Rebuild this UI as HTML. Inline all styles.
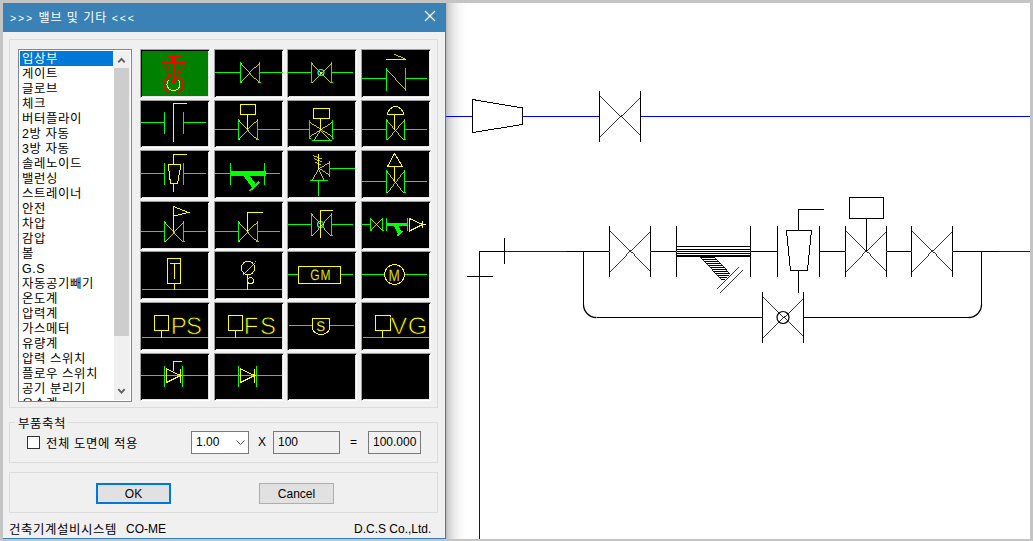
<!DOCTYPE html><html lang="ko"><head><meta charset="utf-8"><title>밸브 및 기타</title><style>
html,body{margin:0;padding:0}
body{width:1033px;height:541px;overflow:hidden;background:#c4c4c4;position:relative;font-family:"Liberation Sans","Noto Sans CJK KR",sans-serif;font-size:12px;color:#000}
.abs{position:absolute}
#canvas{left:446px;top:3px;width:584px;height:536px;background:#fff}
#shadow{left:446px;top:3px;width:20px;height:536px;background:linear-gradient(to right,rgba(0,0,0,.27),rgba(0,0,0,.17) 15%,rgba(0,0,0,.085) 40%,rgba(0,0,0,.03) 70%,rgba(0,0,0,0))}
#dlg{left:3px;top:3px;width:443px;height:536px;background:#f0f0f0;box-sizing:border-box;border-right:1px solid #3a82b6;border-bottom:1px solid #3a82b6}
#title{left:3px;top:3px;width:443px;height:29px;background:#3a82b6;color:#fff}
#title span{position:absolute;left:7px;top:7px;line-height:16px;white-space:pre;letter-spacing:1px}
#title i{font-style:normal;font-size:10.5px;letter-spacing:1.9px}
.grp{border:1px solid #dcdcdc;box-sizing:border-box}
#list{left:18px;top:49px;width:114px;height:353px;border:1px solid #828790;background:#fff;box-sizing:border-box;overflow:hidden}
.it{position:absolute;left:1px;width:93px;height:15px;line-height:17px;padding-left:2px;box-sizing:border-box;white-space:nowrap;letter-spacing:.6px;font-size:12.4px}
.sel{background:#0078d7;color:#fff}
#sb{left:95px;top:1px;width:16px;height:349px;background:#f0f0f0}
#thumb{left:0;top:17px;width:15px;height:268px;background:#cdcdcd}
.cell{width:70px;height:48px;box-sizing:border-box;background:#000;border:1px solid;border-color:#a0a0a0 #fff #fff #a0a0a0;box-shadow:inset 1px 1px 0 #000, inset -1px -1px 0 #e3e3e3}
.edit{box-sizing:border-box;border:1px solid #7a7a7a;height:23px;line-height:20px;padding-left:4px;white-space:nowrap;overflow:hidden}
.btn{box-sizing:border-box;border:1px solid #adadad;background:#e1e1e1;height:21px;line-height:20px;text-align:center}
.t{white-space:nowrap;line-height:14px}
.k{letter-spacing:.6px;font-size:12.4px}
</style></head><body>
<div id="canvas" class="abs"></div><div id="shadow" class="abs"></div>
<div id="dlg" class="abs"></div>
<div id="title" class="abs"><span><i>&gt;&gt;&gt;</i> 밸브 및 기타 <i>&lt;&lt;&lt;</i></span></div>
<div class="abs grp" style="left:9px;top:39px;width:429px;height:369px"></div>
<div class="abs grp" style="left:9px;top:422px;width:429px;height:41px"></div>
<div class="abs grp" style="left:9px;top:472px;width:429px;height:41px"></div>
<div class="abs t k" style="left:15px;top:417px;background:#f0f0f0;padding:0 2px 0 3px">부품축척</div>
<div id="list" class="abs">
<div class="it sel" style="top:1px">입상부</div>
<div class="it" style="top:16px">게이트</div>
<div class="it" style="top:31px">글로브</div>
<div class="it" style="top:46px">체크</div>
<div class="it" style="top:61px">버터플라이</div>
<div class="it" style="top:76px">2방 자동</div>
<div class="it" style="top:91px">3방 자동</div>
<div class="it" style="top:106px">솔레노이드</div>
<div class="it" style="top:121px">밸런싱</div>
<div class="it" style="top:136px">스트레이너</div>
<div class="it" style="top:151px">안전</div>
<div class="it" style="top:166px">차압</div>
<div class="it" style="top:181px">감압</div>
<div class="it" style="top:196px">볼</div>
<div class="it" style="top:211px">G.S</div>
<div class="it" style="top:226px">자동공기빼기</div>
<div class="it" style="top:241px">온도계</div>
<div class="it" style="top:256px">압력계</div>
<div class="it" style="top:271px">가스메터</div>
<div class="it" style="top:286px">유량계</div>
<div class="it" style="top:301px">압력 스위치</div>
<div class="it" style="top:316px">플로우 스위치</div>
<div class="it" style="top:331px">공기 분리기</div>
<div class="it" style="top:346px">유수계</div>
<div id="sb" class="abs"><div id="thumb" class="abs"></div></div>
</div>
<div class="abs cell" style="left:140px;top:49px;height:49px;background:#008000"></div>
<div class="abs cell" style="left:214px;top:49px;height:49px"></div>
<div class="abs cell" style="left:287px;top:49px;height:49px"></div>
<div class="abs cell" style="left:361px;top:49px;height:49px"></div>
<div class="abs cell" style="left:140px;top:100px;height:48px"></div>
<div class="abs cell" style="left:214px;top:100px;height:48px"></div>
<div class="abs cell" style="left:287px;top:100px;height:48px"></div>
<div class="abs cell" style="left:361px;top:100px;height:48px"></div>
<div class="abs cell" style="left:140px;top:150px;height:49px"></div>
<div class="abs cell" style="left:214px;top:150px;height:49px"></div>
<div class="abs cell" style="left:287px;top:150px;height:49px"></div>
<div class="abs cell" style="left:361px;top:150px;height:49px"></div>
<div class="abs cell" style="left:140px;top:201px;height:49px"></div>
<div class="abs cell" style="left:214px;top:201px;height:49px"></div>
<div class="abs cell" style="left:287px;top:201px;height:49px"></div>
<div class="abs cell" style="left:361px;top:201px;height:49px"></div>
<div class="abs cell" style="left:140px;top:251px;height:49px"></div>
<div class="abs cell" style="left:214px;top:251px;height:49px"></div>
<div class="abs cell" style="left:287px;top:251px;height:49px"></div>
<div class="abs cell" style="left:361px;top:251px;height:49px"></div>
<div class="abs cell" style="left:140px;top:302px;height:49px"></div>
<div class="abs cell" style="left:214px;top:302px;height:49px"></div>
<div class="abs cell" style="left:287px;top:302px;height:49px"></div>
<div class="abs cell" style="left:361px;top:302px;height:49px"></div>
<div class="abs cell" style="left:140px;top:353px;height:48px"></div>
<div class="abs cell" style="left:214px;top:353px;height:48px"></div>
<div class="abs cell" style="left:287px;top:353px;height:48px"></div>
<div class="abs cell" style="left:361px;top:353px;height:48px"></div>
<div class="abs" style="left:27px;top:436px;width:13px;height:13px;box-sizing:border-box;border:1px solid #333;background:#fff"></div>
<div class="abs t k" style="left:46px;top:437px">전체 도면에 적용</div>
<div class="abs edit" style="left:191px;top:431px;width:58px;background:#fff">1.00</div>
<div class="abs t" style="left:258px;top:435px">X</div>
<div class="abs edit" style="left:273px;top:431px;width:67px">100</div>
<div class="abs t" style="left:350px;top:435px">=</div>
<div class="abs edit" style="left:368px;top:431px;width:53px">100.000</div>
<div class="abs btn" style="left:96px;top:483px;width:75px;border:2px solid #0078d7;line-height:18px">OK</div>
<div class="abs btn" style="left:259px;top:483px;width:75px">Cancel</div>
<div class="abs t k" style="left:9px;top:523px">건축기계설비시스템</div>
<div class="abs t" style="left:126px;top:522px">CO-ME</div>
<div class="abs t" style="left:354px;top:522px">D.C.S Co.,Ltd.</div>
<svg class="abs" style="left:0;top:0" width="1033" height="541" viewBox="0 0 1033 541" shape-rendering="crispEdges"><line x1="446" y1="116.5" x2="472" y2="116.5" stroke="#0000ff" stroke-width="1" /><line x1="523" y1="116.5" x2="599" y2="116.5" stroke="#0000ff" stroke-width="1" /><line x1="641" y1="116.5" x2="1030" y2="116.5" stroke="#0000ff" stroke-width="1" /><path d="M472.5 99.5 L522.5 108 L522.5 124.5 L472.5 132.5 Z" stroke="#000" stroke-width="1" fill="none" /><line x1="599.5" y1="91" x2="599.5" y2="142" stroke="#000" stroke-width="1" /><line x1="640.5" y1="91" x2="640.5" y2="142" stroke="#000" stroke-width="1" /><line x1="599.5" y1="96.5" x2="641.3" y2="137.3" stroke="#000" stroke-width="0.8" /><line x1="599.5" y1="136.5" x2="641.3" y2="95.7" stroke="#000" stroke-width="0.8" /><line x1="479.5" y1="251" x2="479.5" y2="277" stroke="#000" stroke-width="1" /><line x1="479.5" y1="277" x2="479.5" y2="539" stroke="#0000ff" stroke-width="1" /><line x1="467" y1="276.5" x2="493" y2="276.5" stroke="#000" stroke-width="1" /><line x1="479" y1="251.5" x2="505" y2="251.5" stroke="#000" stroke-width="1" /><line x1="504.5" y1="238" x2="504.5" y2="264" stroke="#000" stroke-width="1" /><line x1="505" y1="251.5" x2="567" y2="251.5" stroke="#0000ff" stroke-width="1" /><line x1="567" y1="251.5" x2="609" y2="251.5" stroke="#000" stroke-width="1" /><line x1="609.5" y1="226" x2="609.5" y2="277" stroke="#000" stroke-width="1" /><line x1="650.5" y1="226" x2="650.5" y2="277" stroke="#000" stroke-width="1" /><line x1="609.5" y1="231.5" x2="651.3" y2="272.3" stroke="#000" stroke-width="0.8" /><line x1="609.5" y1="271.5" x2="651.3" y2="230.7" stroke="#000" stroke-width="0.8" /><line x1="651" y1="251.5" x2="677" y2="251.5" stroke="#000" stroke-width="1" /><line x1="676.5" y1="226" x2="676.5" y2="277" stroke="#000" stroke-width="1" /><line x1="750.5" y1="226" x2="750.5" y2="277" stroke="#000" stroke-width="1" /><line x1="676" y1="246.5" x2="751" y2="246.5" stroke="#000" stroke-width="1" /><line x1="676" y1="249.5" x2="751" y2="249.5" stroke="#000" stroke-width="1" /><line x1="676" y1="251.5" x2="751" y2="251.5" stroke="#000" stroke-width="1" /><line x1="676" y1="253.5" x2="751" y2="253.5" stroke="#000" stroke-width="1" /><line x1="676" y1="255.5" x2="751" y2="255.5" stroke="#000" stroke-width="1" /><line x1="676" y1="256.5" x2="751" y2="256.5" stroke="#000" stroke-width="1" /><line x1="701" y1="257.5" x2="715" y2="257.5" stroke="#000" stroke-width="1" /><line x1="702" y1="259.5" x2="717" y2="259.5" stroke="#000" stroke-width="1" /><line x1="704" y1="261.5" x2="719" y2="261.5" stroke="#000" stroke-width="1" /><line x1="706" y1="263.5" x2="721" y2="263.5" stroke="#000" stroke-width="1" /><line x1="708" y1="265.5" x2="723" y2="265.5" stroke="#000" stroke-width="1" /><line x1="710" y1="267.5" x2="725" y2="267.5" stroke="#000" stroke-width="1" /><line x1="712" y1="269.5" x2="727" y2="269.5" stroke="#000" stroke-width="1" /><line x1="713" y1="271.5" x2="728" y2="271.5" stroke="#000" stroke-width="1" /><line x1="715" y1="273.5" x2="730" y2="273.5" stroke="#000" stroke-width="1" /><line x1="717" y1="275.5" x2="729" y2="275.5" stroke="#000" stroke-width="1" /><line x1="719" y1="277.5" x2="727" y2="277.5" stroke="#000" stroke-width="1" /><line x1="721" y1="279.5" x2="725" y2="279.5" stroke="#000" stroke-width="1" /><line x1="699.6" y1="256" x2="721.7" y2="280" stroke="#000" stroke-width="0.8" /><line x1="713.3" y1="256" x2="729.8" y2="273.5" stroke="#000" stroke-width="0.8" /><line x1="716" y1="289" x2="738.5" y2="266.5" stroke="#000" stroke-width="0.8" /><line x1="720" y1="292.5" x2="742.5" y2="270" stroke="#000" stroke-width="0.8" /><line x1="751" y1="251.5" x2="778" y2="251.5" stroke="#000" stroke-width="1" /><line x1="777.5" y1="226" x2="777.5" y2="277" stroke="#000" stroke-width="1" /><line x1="819.5" y1="226" x2="819.5" y2="277" stroke="#000" stroke-width="1" /><path d="M786.5 230.5 L811.5 230.5 L807.5 270.5 L790.5 270.5 Z" stroke="#000" stroke-width="1" fill="none" /><line x1="798.5" y1="209" x2="798.5" y2="231" stroke="#000" stroke-width="1" /><line x1="798" y1="209.5" x2="824" y2="209.5" stroke="#000" stroke-width="1" /><line x1="798.5" y1="271" x2="798.5" y2="293" stroke="#000" stroke-width="1" /><line x1="820" y1="251.5" x2="846" y2="251.5" stroke="#000" stroke-width="1" /><line x1="845.5" y1="226" x2="845.5" y2="277" stroke="#000" stroke-width="1" /><line x1="886.5" y1="226" x2="886.5" y2="277" stroke="#000" stroke-width="1" /><line x1="845.5" y1="231.5" x2="887.3" y2="272.3" stroke="#000" stroke-width="0.8" /><line x1="845.5" y1="271.5" x2="887.3" y2="230.7" stroke="#000" stroke-width="0.8" /><line x1="866.5" y1="218" x2="866.5" y2="252" stroke="#000" stroke-width="1" /><path d="M849.5 197.5 H883.5 V218.5 H849.5 Z" stroke="#000" stroke-width="1" fill="none" /><line x1="887" y1="251.5" x2="912" y2="251.5" stroke="#000" stroke-width="1" /><line x1="911.5" y1="226" x2="911.5" y2="277" stroke="#000" stroke-width="1" /><line x1="952.5" y1="226" x2="952.5" y2="277" stroke="#000" stroke-width="1" /><line x1="911.5" y1="231.5" x2="953.3" y2="272.3" stroke="#000" stroke-width="0.8" /><line x1="911.5" y1="271.5" x2="953.3" y2="230.7" stroke="#000" stroke-width="0.8" /><line x1="953" y1="251.5" x2="999" y2="251.5" stroke="#000" stroke-width="1" /><line x1="999" y1="251.5" x2="1030" y2="251.5" stroke="#0000ff" stroke-width="1" /><line x1="583.5" y1="251" x2="583.5" y2="305" stroke="#000" stroke-width="1" /><line x1="597" y1="317.5" x2="762" y2="317.5" stroke="#000" stroke-width="1" /><path d="M583.5 304.5 A13 13 0 0 0 596.5 317.5" stroke="#000" stroke-width="1.3" fill="none" shape-rendering="geometricPrecision"/><line x1="981.5" y1="251" x2="981.5" y2="305" stroke="#000" stroke-width="1" /><line x1="804" y1="317.5" x2="969" y2="317.5" stroke="#000" stroke-width="1" /><path d="M981.5 304.5 A13 13 0 0 1 968.5 317.5" stroke="#000" stroke-width="1.3" fill="none" shape-rendering="geometricPrecision"/><line x1="762.5" y1="292" x2="762.5" y2="343" stroke="#000" stroke-width="1" /><line x1="803.5" y1="292" x2="803.5" y2="343" stroke="#000" stroke-width="1" /><line x1="762.5" y1="297.5" x2="804.3" y2="338.3" stroke="#000" stroke-width="0.8" /><line x1="762.5" y1="337.5" x2="804.3" y2="296.7" stroke="#000" stroke-width="0.8" /><circle cx="783" cy="317.5" r="6" fill="none" stroke="#000" stroke-width="1.2" shape-rendering="geometricPrecision"/><line x1="609" y1="251.5" x2="610" y2="251.5" stroke="#00a000" stroke-width="1" /><line x1="650" y1="251.5" x2="651" y2="251.5" stroke="#00a000" stroke-width="1" /><line x1="676" y1="251.5" x2="677" y2="251.5" stroke="#00a000" stroke-width="1" /><line x1="750" y1="251.5" x2="751" y2="251.5" stroke="#00a000" stroke-width="1" /><line x1="845" y1="251.5" x2="846" y2="251.5" stroke="#00a000" stroke-width="1" /><line x1="886" y1="251.5" x2="887" y2="251.5" stroke="#00a000" stroke-width="1" /><line x1="911" y1="251.5" x2="912" y2="251.5" stroke="#00a000" stroke-width="1" /><line x1="952" y1="251.5" x2="953" y2="251.5" stroke="#00a000" stroke-width="1" /><line x1="173.5" y1="52" x2="173.5" y2="84" stroke="#ff0000" stroke-width="1" /><line x1="167" y1="55.5" x2="181" y2="55.5" stroke="#ff0000" stroke-width="1" /><line x1="167" y1="56.5" x2="181" y2="56.5" stroke="#ff0000" stroke-width="1" /><line x1="162" y1="61.5" x2="186" y2="61.5" stroke="#ff0000" stroke-width="1" /><line x1="162" y1="62.5" x2="186" y2="62.5" stroke="#ff0000" stroke-width="1" /><line x1="162.5" y1="62" x2="169.5" y2="76.5" stroke="#ff0000" stroke-width="0.8" /><line x1="185.5" y1="62" x2="178.5" y2="76.5" stroke="#ff0000" stroke-width="0.8" /><line x1="167" y1="63" x2="173" y2="83.5" stroke="#ff0000" stroke-width="0.8" /><line x1="181" y1="63" x2="175" y2="83.5" stroke="#ff0000" stroke-width="0.8" /><line x1="174.5" y1="57" x2="174.5" y2="83" stroke="#ff0000" stroke-width="1" /><line x1="172" y1="58.5" x2="176" y2="58.5" stroke="#ff0000" stroke-width="1" /><line x1="172" y1="59.5" x2="176" y2="59.5" stroke="#ff0000" stroke-width="1" /><line x1="172" y1="60.5" x2="176" y2="60.5" stroke="#ff0000" stroke-width="1" /><circle cx="173.5" cy="84.5" r="9.5" fill="none" stroke="#f00"/><path d="M168.5 80 A6.5 6.5 0 1 0 178.5 80" stroke="#ffff00" stroke-width="1" fill="none" /><line x1="215" y1="72.5" x2="241" y2="72.5" stroke="#00ff00" stroke-width="1" /><line x1="259" y1="72.5" x2="283" y2="72.5" stroke="#00ff00" stroke-width="1" /><line x1="240.5" y1="62" x2="240.5" y2="83" stroke="#00ff00" stroke-width="1" /><line x1="259.5" y1="62" x2="259.5" y2="83" stroke="#00ff00" stroke-width="1" /><line x1="240" y1="82.5" x2="242" y2="82.5" stroke="#00ff00" stroke-width="1" /><line x1="259" y1="82.5" x2="261" y2="82.5" stroke="#00ff00" stroke-width="1" /><line x1="241" y1="62.5" x2="259" y2="82.5" stroke="#ffff00" stroke-width="0.8" /><line x1="241" y1="82.5" x2="259" y2="62.5" stroke="#ffff00" stroke-width="0.8" /><line x1="287" y1="72.5" x2="312" y2="72.5" stroke="#00ff00" stroke-width="1" /><line x1="331" y1="72.5" x2="353" y2="72.5" stroke="#00ff00" stroke-width="1" /><line x1="311.5" y1="62" x2="311.5" y2="83" stroke="#00ff00" stroke-width="1" /><line x1="331.5" y1="62" x2="331.5" y2="83" stroke="#00ff00" stroke-width="1" /><line x1="311" y1="82.5" x2="313" y2="82.5" stroke="#00ff00" stroke-width="1" /><line x1="331" y1="82.5" x2="333" y2="82.5" stroke="#00ff00" stroke-width="1" /><line x1="312" y1="62.5" x2="331" y2="82.5" stroke="#ffff00" stroke-width="0.8" /><line x1="312" y1="82.5" x2="331" y2="62.5" stroke="#ffff00" stroke-width="0.8" /><circle cx="321" cy="72.5" r="3" fill="none" stroke="#0ff" stroke-width="1.2" shape-rendering="geometricPrecision"/><rect x="320" y="72" width="2" height="2" fill="#ff0"/><line x1="361" y1="78.5" x2="387" y2="78.5" stroke="#00ff00" stroke-width="1" /><line x1="405" y1="78.5" x2="427" y2="78.5" stroke="#00ff00" stroke-width="1" /><line x1="386.5" y1="68" x2="386.5" y2="91" stroke="#00ff00" stroke-width="1" /><line x1="405.5" y1="68" x2="405.5" y2="91" stroke="#00ff00" stroke-width="1" /><line x1="386.5" y1="69" x2="405.5" y2="90" stroke="#ffff00" stroke-width="0.8" /><line x1="386" y1="59.5" x2="406" y2="59.5" stroke="#ffff00" stroke-width="1" /><line x1="394" y1="54" x2="406" y2="59.5" stroke="#ffff00" stroke-width="0.8" /><line x1="141" y1="122.5" x2="165" y2="122.5" stroke="#00ff00" stroke-width="1" /><line x1="164.5" y1="112" x2="164.5" y2="134" stroke="#00ff00" stroke-width="1" /><line x1="183.5" y1="112" x2="183.5" y2="134" stroke="#00ff00" stroke-width="1" /><line x1="183" y1="122.5" x2="206" y2="122.5" stroke="#00ff00" stroke-width="1" /><line x1="173.5" y1="103" x2="173.5" y2="142" stroke="#ffff00" stroke-width="1" /><line x1="173" y1="103.5" x2="187" y2="103.5" stroke="#ffff00" stroke-width="1" /><line x1="215" y1="129.5" x2="239" y2="129.5" stroke="#00ff00" stroke-width="1" /><line x1="257" y1="129.5" x2="280" y2="129.5" stroke="#00ff00" stroke-width="1" /><line x1="238.5" y1="119" x2="238.5" y2="140" stroke="#00ff00" stroke-width="1" /><line x1="257.5" y1="119" x2="257.5" y2="140" stroke="#00ff00" stroke-width="1" /><line x1="238" y1="139.5" x2="240" y2="139.5" stroke="#00ff00" stroke-width="1" /><line x1="257" y1="139.5" x2="259" y2="139.5" stroke="#00ff00" stroke-width="1" /><line x1="239" y1="119.5" x2="257" y2="139.5" stroke="#ffff00" stroke-width="0.8" /><line x1="239" y1="139.5" x2="257" y2="119.5" stroke="#ffff00" stroke-width="0.8" /><line x1="247.5" y1="114" x2="247.5" y2="130" stroke="#ffff00" stroke-width="1" /><path d="M240.5 104.5 H255.5 V114.5 H240.5 Z" stroke="#ffff00" stroke-width="1" fill="none" /><line x1="287" y1="129.5" x2="310" y2="129.5" stroke="#00ff00" stroke-width="1" /><line x1="332" y1="129.5" x2="353" y2="129.5" stroke="#00ff00" stroke-width="1" /><line x1="309.5" y1="120" x2="309.5" y2="139" stroke="#00ff00" stroke-width="1" /><line x1="332.5" y1="120" x2="332.5" y2="139" stroke="#00ff00" stroke-width="1" /><line x1="309" y1="138.5" x2="311" y2="138.5" stroke="#00ff00" stroke-width="1" /><line x1="332" y1="138.5" x2="334" y2="138.5" stroke="#00ff00" stroke-width="1" /><line x1="310" y1="122.5" x2="332" y2="136.5" stroke="#ffff00" stroke-width="0.8" /><line x1="310" y1="136.5" x2="332" y2="122.5" stroke="#ffff00" stroke-width="0.8" /><line x1="320.5" y1="129.5" x2="313.5" y2="140" stroke="#ffff00" stroke-width="0.8" /><line x1="320.5" y1="129.5" x2="330.5" y2="140" stroke="#ffff00" stroke-width="0.8" /><line x1="312" y1="140.5" x2="332" y2="140.5" stroke="#00ff00" stroke-width="1" /><line x1="320.5" y1="118" x2="320.5" y2="130" stroke="#ffff00" stroke-width="1" /><path d="M313.5 108.5 H329.5 V118.5 H313.5 Z" stroke="#ffff00" stroke-width="1" fill="none" /><line x1="361" y1="129.5" x2="387" y2="129.5" stroke="#00ff00" stroke-width="1" /><line x1="404" y1="129.5" x2="427" y2="129.5" stroke="#00ff00" stroke-width="1" /><line x1="386.5" y1="119" x2="386.5" y2="140" stroke="#00ff00" stroke-width="1" /><line x1="404.5" y1="119" x2="404.5" y2="140" stroke="#00ff00" stroke-width="1" /><line x1="386" y1="139.5" x2="388" y2="139.5" stroke="#00ff00" stroke-width="1" /><line x1="404" y1="139.5" x2="406" y2="139.5" stroke="#00ff00" stroke-width="1" /><line x1="387" y1="119.5" x2="404" y2="139.5" stroke="#ffff00" stroke-width="0.8" /><line x1="387" y1="139.5" x2="404" y2="119.5" stroke="#ffff00" stroke-width="0.8" /><line x1="394.5" y1="114" x2="394.5" y2="130" stroke="#ffff00" stroke-width="1" /><path d="M387.5 114.5 H403.5 C403.5 110 399 106.5 395.5 106.5 C392 106.5 387.5 110 387.5 114.5 Z" stroke="#ffff00" stroke-width="1" fill="none" /><line x1="141" y1="173.5" x2="165" y2="173.5" stroke="#00ff00" stroke-width="1" /><line x1="164.5" y1="163" x2="164.5" y2="185" stroke="#00ff00" stroke-width="1" /><line x1="183.5" y1="163" x2="183.5" y2="185" stroke="#00ff00" stroke-width="1" /><line x1="183" y1="173.5" x2="206" y2="173.5" stroke="#00ff00" stroke-width="1" /><path d="M168.5 164.5 H180.5 V167 L177.5 183.5 H170.5 L168.5 167 Z" stroke="#ffff00" stroke-width="1" fill="none" /><line x1="173.5" y1="154" x2="173.5" y2="165" stroke="#ffff00" stroke-width="1" /><line x1="173" y1="154.5" x2="187" y2="154.5" stroke="#ffff00" stroke-width="1" /><line x1="173.5" y1="184" x2="173.5" y2="192" stroke="#ffff00" stroke-width="1" /><line x1="215" y1="173.5" x2="231" y2="173.5" stroke="#00ff00" stroke-width="1" /><line x1="230.5" y1="163" x2="230.5" y2="185" stroke="#00ff00" stroke-width="1" /><line x1="264.5" y1="163" x2="264.5" y2="185" stroke="#00ff00" stroke-width="1" /><line x1="264" y1="173.5" x2="280" y2="173.5" stroke="#00ff00" stroke-width="1" /><rect x="230" y="171" width="36" height="5" fill="#0f0"/><line x1="245" y1="174" x2="254.5" y2="186.5" stroke="#00ff00" stroke-width="5" /><line x1="249.5" y1="191" x2="259.5" y2="181.5" stroke="#00ff00" stroke-width="2" /><line x1="329" y1="168.5" x2="355" y2="168.5" stroke="#00ff00" stroke-width="1" /><line x1="329.5" y1="161" x2="329.5" y2="177" stroke="#00ff00" stroke-width="1" /><line x1="318.5" y1="168.5" x2="329.5" y2="162" stroke="#ffff00" stroke-width="0.8" /><line x1="318.5" y1="168.5" x2="329.5" y2="176" stroke="#ffff00" stroke-width="0.8" /><line x1="318.5" y1="168.5" x2="311.5" y2="180" stroke="#ffff00" stroke-width="0.8" /><line x1="318.5" y1="168.5" x2="324.5" y2="180" stroke="#ffff00" stroke-width="0.8" /><line x1="310" y1="180.5" x2="328" y2="180.5" stroke="#00ff00" stroke-width="1" /><line x1="318.5" y1="181" x2="318.5" y2="196" stroke="#00ff00" stroke-width="1" /><line x1="318.5" y1="154" x2="318.5" y2="169" stroke="#ffff00" stroke-width="1" /><line x1="313" y1="155.5" x2="322" y2="159" stroke="#ffff00" stroke-width="0.8" /><line x1="314" y1="158.5" x2="322" y2="162" stroke="#ffff00" stroke-width="0.8" /><line x1="315" y1="162" x2="321" y2="165" stroke="#ffff00" stroke-width="0.8" /><line x1="361" y1="181.5" x2="387" y2="181.5" stroke="#00ff00" stroke-width="1" /><line x1="404" y1="181.5" x2="427" y2="181.5" stroke="#00ff00" stroke-width="1" /><line x1="386.5" y1="170" x2="386.5" y2="193" stroke="#00ff00" stroke-width="1" /><line x1="404.5" y1="170" x2="404.5" y2="193" stroke="#00ff00" stroke-width="1" /><line x1="386" y1="192.5" x2="388" y2="192.5" stroke="#00ff00" stroke-width="1" /><line x1="404" y1="192.5" x2="406" y2="192.5" stroke="#00ff00" stroke-width="1" /><line x1="387" y1="170.5" x2="404" y2="192.5" stroke="#ffff00" stroke-width="0.8" /><line x1="387" y1="192.5" x2="404" y2="170.5" stroke="#ffff00" stroke-width="0.8" /><line x1="394.5" y1="166" x2="394.5" y2="182" stroke="#ffff00" stroke-width="1" /><path d="M387.5 166.5 H402.5 L394.5 153.5 Z" stroke="#ffff00" stroke-width="1" fill="none" /><line x1="141" y1="231.5" x2="165" y2="231.5" stroke="#00ff00" stroke-width="1" /><line x1="183" y1="231.5" x2="206" y2="231.5" stroke="#00ff00" stroke-width="1" /><line x1="164.5" y1="221" x2="164.5" y2="242" stroke="#00ff00" stroke-width="1" /><line x1="183.5" y1="221" x2="183.5" y2="242" stroke="#00ff00" stroke-width="1" /><line x1="164" y1="241.5" x2="166" y2="241.5" stroke="#00ff00" stroke-width="1" /><line x1="183" y1="241.5" x2="185" y2="241.5" stroke="#00ff00" stroke-width="1" /><line x1="165" y1="221.5" x2="183" y2="241.5" stroke="#ffff00" stroke-width="0.8" /><line x1="165" y1="241.5" x2="183" y2="221.5" stroke="#ffff00" stroke-width="0.8" /><line x1="173.5" y1="206" x2="173.5" y2="232" stroke="#ffff00" stroke-width="1" /><path d="M173.5 206.5 L188.5 212.5 L173.5 216" stroke="#ffff00" stroke-width="1" fill="none" /><line x1="215" y1="231.5" x2="239" y2="231.5" stroke="#00ff00" stroke-width="1" /><line x1="257" y1="231.5" x2="280" y2="231.5" stroke="#00ff00" stroke-width="1" /><line x1="238.5" y1="221" x2="238.5" y2="242" stroke="#00ff00" stroke-width="1" /><line x1="257.5" y1="221" x2="257.5" y2="242" stroke="#00ff00" stroke-width="1" /><line x1="238" y1="241.5" x2="240" y2="241.5" stroke="#00ff00" stroke-width="1" /><line x1="257" y1="241.5" x2="259" y2="241.5" stroke="#00ff00" stroke-width="1" /><line x1="239" y1="221.5" x2="257" y2="241.5" stroke="#ffff00" stroke-width="0.8" /><line x1="239" y1="241.5" x2="257" y2="221.5" stroke="#ffff00" stroke-width="0.8" /><line x1="247.5" y1="212" x2="247.5" y2="232" stroke="#ffff00" stroke-width="1" /><line x1="247" y1="212.5" x2="263" y2="212.5" stroke="#ffff00" stroke-width="1" /><line x1="287" y1="224.5" x2="312" y2="224.5" stroke="#00ff00" stroke-width="1" /><line x1="331" y1="224.5" x2="353" y2="224.5" stroke="#00ff00" stroke-width="1" /><line x1="311.5" y1="213" x2="311.5" y2="236" stroke="#00ff00" stroke-width="1" /><line x1="331.5" y1="213" x2="331.5" y2="236" stroke="#00ff00" stroke-width="1" /><line x1="311" y1="235.5" x2="313" y2="235.5" stroke="#00ff00" stroke-width="1" /><line x1="331" y1="235.5" x2="333" y2="235.5" stroke="#00ff00" stroke-width="1" /><line x1="312" y1="213.5" x2="331" y2="235.5" stroke="#ffff00" stroke-width="0.8" /><line x1="312" y1="235.5" x2="331" y2="213.5" stroke="#ffff00" stroke-width="0.8" /><circle cx="320.5" cy="224.5" r="3" fill="none" stroke="#0ff" stroke-width="1.2" shape-rendering="geometricPrecision"/><line x1="320.5" y1="210" x2="320.5" y2="238" stroke="#ffff00" stroke-width="1" /><line x1="320" y1="210.5" x2="333" y2="210.5" stroke="#ffff00" stroke-width="1" /><line x1="361" y1="224.5" x2="371" y2="224.5" stroke="#00ff00" stroke-width="1" /><line x1="370.5" y1="218" x2="370.5" y2="231" stroke="#00ff00" stroke-width="1" /><line x1="382.5" y1="218" x2="382.5" y2="231" stroke="#00ff00" stroke-width="1" /><line x1="370" y1="230.5" x2="372" y2="230.5" stroke="#00ff00" stroke-width="1" /><line x1="382" y1="230.5" x2="384" y2="230.5" stroke="#00ff00" stroke-width="1" /><line x1="371" y1="219.5" x2="382" y2="229.5" stroke="#ffff00" stroke-width="0.8" /><line x1="371" y1="229.5" x2="382" y2="219.5" stroke="#ffff00" stroke-width="0.8" /><line x1="386.5" y1="218" x2="386.5" y2="231" stroke="#00ff00" stroke-width="1" /><line x1="407.5" y1="218" x2="407.5" y2="231" stroke="#00ff00" stroke-width="1" /><rect x="386" y="223" width="22" height="3" fill="#0f0"/><line x1="395.5" y1="225" x2="400" y2="233" stroke="#00ff00" stroke-width="4" /><line x1="397.5" y1="235.5" x2="402.5" y2="231" stroke="#00ff00" stroke-width="2" /><path d="M409.5 218.5 V231 L422.5 224.5 Z" stroke="#ffff00" stroke-width="1" fill="none" /><line x1="422.5" y1="221" x2="422.5" y2="228" stroke="#ffff00" stroke-width="1" /><line x1="423" y1="224.5" x2="426" y2="224.5" stroke="#fff" stroke-width="1" /><line x1="142" y1="289.5" x2="208" y2="289.5" stroke="#00ff00" stroke-width="1" /><path d="M167.5 258.5 H180.5 V283.5 H167.5 Z" stroke="#ffff00" stroke-width="1" fill="none" /><line x1="174.5" y1="284" x2="174.5" y2="290" stroke="#ffff00" stroke-width="1" /><line x1="170" y1="263.5" x2="181" y2="263.5" stroke="#ffff00" stroke-width="1" /><line x1="174.5" y1="263" x2="174.5" y2="279" stroke="#ffff00" stroke-width="1" /><line x1="216" y1="289.5" x2="282" y2="289.5" stroke="#00ff00" stroke-width="1" /><line x1="247.5" y1="274" x2="247.5" y2="290" stroke="#ffff00" stroke-width="1" /><ellipse cx="248" cy="268" rx="6.5" ry="7" fill="none" stroke="#ff0"/><line x1="242.5" y1="274" x2="256" y2="261" stroke="#ffff00" stroke-width="0.8" /><circle cx="250.5" cy="280.5" r="3" fill="none" stroke="#ff0"/><line x1="288" y1="274.5" x2="299" y2="274.5" stroke="#00ff00" stroke-width="1" /><line x1="341" y1="274.5" x2="353" y2="274.5" stroke="#00ff00" stroke-width="1" /><path d="M298.5 266.5 H340.5 V283.5 H298.5 Z" stroke="#ffff00" stroke-width="1" fill="none" /><line x1="362" y1="274.5" x2="385" y2="274.5" stroke="#00ff00" stroke-width="1" /><line x1="405" y1="274.5" x2="427" y2="274.5" stroke="#00ff00" stroke-width="1" /><circle cx="394.5" cy="274.5" r="10" fill="none" stroke="#ff0"/><line x1="142" y1="337.5" x2="208" y2="337.5" stroke="#00ff00" stroke-width="1" /><path d="M154.5 315.5 H168.5 V330.5 H154.5 Z" stroke="#ffff00" stroke-width="1" fill="none" /><line x1="161.5" y1="331" x2="161.5" y2="338" stroke="#ffff00" stroke-width="1" /><line x1="216" y1="337.5" x2="282" y2="337.5" stroke="#00ff00" stroke-width="1" /><path d="M228.5 315.5 H242.5 V330.5 H228.5 Z" stroke="#ffff00" stroke-width="1" fill="none" /><line x1="235.5" y1="331" x2="235.5" y2="338" stroke="#ffff00" stroke-width="1" /><line x1="289" y1="325.5" x2="313" y2="325.5" stroke="#00ff00" stroke-width="1" /><line x1="330" y1="325.5" x2="354" y2="325.5" stroke="#00ff00" stroke-width="1" /><path d="M312.5 318.5 H329.5 V329 C329.5 332 324 334.5 321 334.5 C318 334.5 312.5 332 312.5 329 Z" stroke="#ffff00" stroke-width="1" fill="none" /><line x1="363" y1="337.5" x2="429" y2="337.5" stroke="#00ff00" stroke-width="1" /><path d="M375.5 315.5 H390.5 V330.5 H375.5 Z" stroke="#ffff00" stroke-width="1" fill="none" /><line x1="382.5" y1="331" x2="382.5" y2="338" stroke="#ffff00" stroke-width="1" /><line x1="141" y1="375.5" x2="208" y2="375.5" stroke="#00ff00" stroke-width="1" /><line x1="164.5" y1="366" x2="164.5" y2="387" stroke="#00ff00" stroke-width="1" /><line x1="182.5" y1="366" x2="182.5" y2="387" stroke="#00ff00" stroke-width="1" /><path d="M166.5 369 V382.5 L180.5 375.5 Z" stroke="#ffff00" stroke-width="1" fill="none" /><line x1="180.5" y1="369" x2="180.5" y2="383" stroke="#ffff00" stroke-width="1" /><line x1="173.5" y1="361" x2="173.5" y2="371" stroke="#ffff00" stroke-width="1" /><line x1="173" y1="361.5" x2="182" y2="361.5" stroke="#ffff00" stroke-width="1" /><line x1="215" y1="375.5" x2="282" y2="375.5" stroke="#00ff00" stroke-width="1" /><line x1="238.5" y1="366" x2="238.5" y2="387" stroke="#00ff00" stroke-width="1" /><line x1="256.5" y1="366" x2="256.5" y2="387" stroke="#00ff00" stroke-width="1" /><path d="M240.5 369 V382.5 L254.5 375.5 Z" stroke="#ffff00" stroke-width="1" fill="none" /><line x1="254.5" y1="369" x2="254.5" y2="383" stroke="#ffff00" stroke-width="1" /><text transform="translate(310.2 280.4) scale(0.8 1)" fill="#ff0" stroke="#000" stroke-width="0.15" font-family="Liberation Sans, sans-serif" font-size="15" letter-spacing="1.2" text-rendering="geometricPrecision" shape-rendering="geometricPrecision">GM</text><text transform="translate(388.6 280.9) scale(0.82 1)" fill="#ff0" stroke="#000" stroke-width="0.2" font-family="Liberation Sans, sans-serif" font-size="16.5" letter-spacing="0" text-rendering="geometricPrecision" shape-rendering="geometricPrecision">M</text><text transform="translate(170.8 333.8) scale(1 1)" fill="#ff0" stroke="#000" stroke-width="0.75" font-family="Liberation Sans, sans-serif" font-size="24" letter-spacing="-0.8" text-rendering="geometricPrecision" shape-rendering="geometricPrecision">PS</text><text transform="translate(243.8 333.8) scale(1 1)" fill="#ff0" stroke="#000" stroke-width="0.75" font-family="Liberation Sans, sans-serif" font-size="24" letter-spacing="1.6" text-rendering="geometricPrecision" shape-rendering="geometricPrecision">FS</text><text transform="translate(316.3 331) scale(0.95 1)" fill="#ff0" stroke="#000" stroke-width="0.1" font-family="Liberation Sans, sans-serif" font-size="14" letter-spacing="0" text-rendering="geometricPrecision" shape-rendering="geometricPrecision">S</text><text transform="translate(390.5 333.8) scale(1.05 1)" fill="#ff0" stroke="#000" stroke-width="0.75" font-family="Liberation Sans, sans-serif" font-size="24" letter-spacing="0.5" text-rendering="geometricPrecision" shape-rendering="geometricPrecision">VG</text><line x1="425" y1="11" x2="435" y2="21" stroke="#fff" stroke-width="1.2" shape-rendering="geometricPrecision"/><line x1="435" y1="11" x2="425" y2="21" stroke="#fff" stroke-width="1.2" shape-rendering="geometricPrecision"/><path d="M118.3 62.3 L121.5 58.8 L124.7 62.3" stroke="#606060" stroke-width="1.9" fill="none" shape-rendering="geometricPrecision"/><path d="M118.3 389.2 L121.5 392.7 L124.7 389.2" stroke="#606060" stroke-width="1.9" fill="none" shape-rendering="geometricPrecision"/><path d="M236.5 440.5 L240.5 444.5 L244.5 440.5" stroke="#444" stroke-width="1" fill="none" shape-rendering="geometricPrecision"/></svg>
</body></html>
